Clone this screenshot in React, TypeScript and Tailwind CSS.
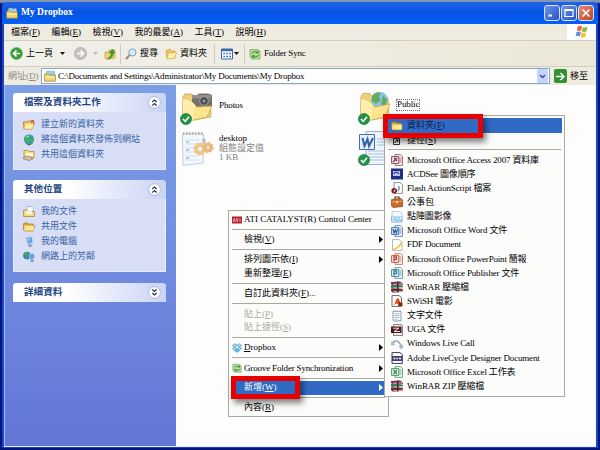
import type { ReactNode } from "react"
import clsx from "clsx"

const Svg = ({ s = 12, box = 12, children }: { s?: number; box?: number; children: ReactNode }) => (
  <svg width={s} height={s} viewBox={`0 0 ${box} ${box}`} className="shrink-0">{children}</svg>
)

// ---------- ICONS ----------

const Folder = ({ s = 12 }: { s?: number }) => (
  <Svg s={s}>
    <path d="M.5 3 1.5 2h3l1 1h4.5v1.500h1.500L10.500 10H1.500L.5 9z" fill="#d9a43a" stroke="#9a7420" strokeWidth=".6" />
    <path d="M1.300 4.600h9.600v5H1.300z" fill="#fbe58e" />
  </Svg>
)

const NewFolder = () => (
  <Svg>
    <path d="M.5 3h4l1-1h3v2l2.800.3L9 10H1z" fill="#f5cf60" stroke="#b1502a" strokeWidth=".7" />
    <path d="M3 5.200h8L9 9.800H1.200z" fill="#fff0a8" />
    <path d="m8 1 3 .3.3 3-1.300-1z" fill="#d4441c" />
  </Svg>
)

const Globe = () => (
  <Svg>
    <path d="M2.500 9.500 6 8.500l4 1-4 2z" fill="#2c6f4c" />
    <circle cx="6" cy="5.400" r="5" fill="#3f8fc4" />
    <path d="M1.500 3c2-3 5-2 6-1L6.500 4 8 6 5 9.500 3 6.500zM8 5l3-1v3L8.500 9.500z" fill="#3db455" />
    <path d="M3 2.500q1.500-1 3-.8L5 3.500z" fill="#b9e8c0" />
  </Svg>
)

const ShareFolder = () => (
  <Svg>
    <path d="M1 1.500h4l1 1h5V9H1z" fill="#f8dc7c" stroke="#ad8228" strokeWidth=".7" />
    <path d="M3 4h7v3H3z" fill="#fff8d4" />
    <path d="M0 9.500 3 7l4 1 3 1.500-4 2z" fill="#f0c39a" stroke="#4d5a93" strokeWidth=".6" />
  </Svg>
)

const DocFolder = () => (
  <Svg>
    <path d="M4 .7h4.500l1.700 1.800V9H4z" fill="#fff" stroke="#8391ad" strokeWidth=".6" />
    <path d="M.6 4h3l1 1.500h6.800v5H.6z" fill="#f7dc81" stroke="#a27b24" strokeWidth=".7" />
    <path d="M3 5.200h6v3H3z" fill="#fffbe6" />
  </Svg>
)

const Computer = () => (
  <Svg>
    <path d="m3 1.500 6-.8 1 6-5.500 1z" fill="#5d9ee8" stroke="#c2d3ec" strokeWidth=".9" />
    <path d="m5 8 3-.5.8 2 .7 1.300-4 .4z" fill="#8fa6ca" />
    <path d="m4.500 2.800 3-.4-2 3z" fill="#a9d4ff" />
  </Svg>
)

const Network = () => (
  <Svg>
    <circle cx="4" cy="4.600" r="3.800" fill="#2c74b5" />
    <path d="M1 3c2-3 4-2 5-1L4 4l1 2-2 2z" fill="#3fae52" />
    <path d="m6 3.200 5-.7.6 5-5 .8z" fill="#5b9be2" stroke="#c4d3ec" strokeWidth=".8" />
    <path d="m7.500 8.500 2.500-.4 1 2.600-3.500.4z" fill="#8297c2" />
  </Svg>
)

const BoxFolder = () => (
  <Svg>
    <path d="M2 3 3 1h3l1 1 3-1 1 3v3H2z" fill="#9fd0e6" stroke="#6d94a8" strokeWidth=".5" />
    <path d="M.6 4.200h4l1 1h5.800v6H.6z" fill="#f4d572" stroke="#a4802c" strokeWidth=".7" />
    <path d="M1.200 6.500h9.600v1.200H1.200z" fill="#fff2b4" />
  </Svg>
)

const Arrow = ({ gray }: { gray?: boolean }) => (
  <Svg s={13} box={13}>
    <circle cx="6.500" cy="6.500" r="6" fill={gray ? "#c4c4bd" : "#3a9a39"} stroke={gray ? "#aaaaa4" : "#71bb6a"} strokeWidth=".8" />
    <path
      d={gray ? "M3 6.500h6M6.500 3.500l3 3-3 3" : "M10 6.500H4M6.500 3.500l-3 3 3 3"}
      fill="none" stroke="#fff" strokeWidth="1.700"
    />
  </Svg>
)

const UpFolder = () => (
  <Svg s={12}>
    <path d="M1 4h4V2h6v8l-7 1.500-3-1z" fill="#efd26b" stroke="#b59639" strokeWidth=".6" />
    <path d="M4 10c3-1 3-3 3-5H5l3.500-4L11 5H9.200c0 3-1 5-5.200 6z" fill="#35a32e" stroke="#1d7c20" strokeWidth=".4" />
  </Svg>
)

const Search = () => (
  <Svg s={12}>
    <path d="M1 11 4.600 7" stroke="#a88768" strokeWidth="2" />
    <circle cx="7.400" cy="4.400" r="3.600" fill="#d5ebfa" stroke="#7b9dc2" />
  </Svg>
)

const OpenFolder = () => (
  <Svg s={12}>
    <path d="M1 2.500 5 1l1 2h4v7l-8 .8z" fill="#efc75a" stroke="#c2972f" strokeWidth=".6" />
    <path d="M3.600 5 11.500 4.600 9.600 10.200 1.800 11z" fill="#fff0a4" stroke="#c9a03b" strokeWidth=".5" />
  </Svg>
)

const Views = () => (
  <Svg s={12}>
    <path d="M.5 1h11v10H.5z" fill="#fff" stroke="#3a67ae" />
    <path d="M.5 1h11v2.200H.5z" fill="#3a67ae" />
    <path d="M2.300 5.500h7.600M2.300 8.500h7.600" stroke="#3e73b8" strokeWidth="1.700" strokeDasharray="1.800 1.100" />
  </Svg>
)

const Sync = ({ s = 12 }: { s?: number }) => (
  <Svg s={s}>
    <path d="M1 1.500h7l3 1.500v8H3L1 9z" fill="#b9dca0" stroke="#73ab57" strokeWidth=".8" />
    <path d="M3 5.500C4 3 7 3 9 5M9 2.800V5H6.500M9.500 7C8 9.500 5 9.500 3.500 8M3.500 10V7.800H6" fill="none" stroke="#43902f" strokeWidth="1.100" />
  </Svg>
)

const Flag = () => (
  <svg width="14" height="14" viewBox="0 0 14 14">
    <path d="M2.800 1.500Q5 .2 7 1.600L6 6.200Q4 5 1.800 6z" fill="#e5683a" />
    <path d="M7.800 2Q10 3 12.600 1.800L11.500 6.500Q9 7.400 6.800 6.500z" fill="#8bbf3f" />
    <path d="M1.500 7Q4 5.800 5.900 7.200L4.800 11.500Q3 10.300.6 11.300z" fill="#5c8ed8" />
    <path d="M6.600 7.600Q9 8.500 11.300 7.500L10.200 12Q8 13 5.500 12z" fill="#f2c338" />
  </svg>
)

const Check = () => (
  <svg width="12" height="12" viewBox="0 0 12 12" className="absolute -left-px bottom-0">
    <circle cx="6" cy="6" r="5.600" fill="#249246" stroke="#13763a" strokeWidth=".6" />
    <path d="m3 6 2.200 2.400L9 3.800" fill="none" stroke="#fff" strokeWidth="1.600" />
  </svg>
)

const PhotosIcon = () => (
  <div className="relative h-[33px] w-[33px]">
    <svg width="33" height="32" viewBox="0 0 33 32">
      <path d="M2 4.500 4 2h7l2 3 16 1 1 19-17 3L2 26z" fill="#ecd07a" stroke="#c09c3f" strokeWidth=".7" />
      <path d="M11 3h5l2-1.500h9l4 1.500v12l-20 1z" fill="#74726d" />
      <path d="M11 3h19v3.500H11z" fill="#93918b" />
      <circle cx="23" cy="9" r="4.300" fill="#4a4a4c" stroke="#a8a6a1" />
      <circle cx="23" cy="9" r="1.700" fill="#8d9299" />
      <path d="M2 7q6 0 9 3l5 5 15-1-5 11-13 3L2 27z" fill="#fae48d" stroke="#c8a344" strokeWidth=".7" />
      <path d="M2 7q6 0 9 3l3 3-2 15-10-1z" fill="#fdeeab" />
    </svg>
    <Check />
  </div>
)

const PublicIcon = () => (
  <div className="relative h-[33px] w-[33px]">
    <svg width="33" height="32" viewBox="0 0 33 32">
      <path d="M2 4.500 4 1.500h7l2 3L29 6l1 19-18 3L2 26z" fill="#ecd07a" stroke="#c09c3f" strokeWidth=".7" />
      <circle cx="20.500" cy="8" r="8" fill="#8fc6e6" stroke="#6fa8cc" strokeWidth=".5" />
      <path d="M13 4q4-5 9-3l-2 4 2 3-5 4-4-3zM24 3l4 5-2 6-4-2 1-4z" fill="#62ab62" />
      <path d="M2 7q6 0 9 3l5 5 15-3-5 13-13 3L2 27z" fill="#fae48d" stroke="#c8a344" strokeWidth=".7" />
      <path d="M2 7q6 0 9 3l3 3-2 15-10-1z" fill="#fdeeab" />
    </svg>
    <Check />
  </div>
)

const IniIcon = () => (
  <svg width="33" height="36" viewBox="0 0 33 36">
    <path d="M1.500 3H22.500l-.5 29-20 2.500z" fill="#f3f8fc" stroke="#b5bec8" strokeWidth=".8" />
    <path d="M2 2.500h21" stroke="#b3b3b3" strokeWidth="3" strokeDasharray="1.500 1.500" />
    <path d="M4 9h14M4 13h13M4 17h9M4 21h8M4 25h12M4 29h14" stroke="#d3e0ec" />
    <path d="M5 11h3M5 19h3M5 27h3" stroke="#9bbde2" strokeWidth="1.500" />
    <circle cx="19" cy="18" r="4" fill="none" stroke="#ecc78e" strokeWidth="4" />
    <circle cx="19" cy="18" r="5.800" fill="none" stroke="#ecc78e" strokeWidth="1.700" strokeDasharray="2.500 2" />
    <circle cx="27" cy="16.500" r="3" fill="none" stroke="#e6bb7c" strokeWidth="3.600" />
    <circle cx="27" cy="16.500" r="5" fill="none" stroke="#e6bb7c" strokeWidth="1.500" strokeDasharray="2 1.800" />
    <path d="m21 8 3.500-.5V12H22z" fill="#b4bcc4" />
  </svg>
)

const WordBig = () => (
  <div className="relative h-[35px] w-[33px]">
    <svg width="33" height="35" viewBox="0 0 33 35">
      <path d="M7 .5h25v33H7z" fill="#eff5fc" stroke="#7f9dc9" strokeWidth=".8" />
      <path d="M18 8h12M18 11h12M18 14h12M9 20h21M9 23h21M9 26h21M9 29h21" stroke="#a9c0e0" />
      <path d="M.5 3.500h15v15H.5z" fill="#e5effb" stroke="#456eab" />
      <path d="m3.500 7 2 8 3-7 1.500 7 4-8" fill="none" stroke="#2f60a8" strokeWidth="2" />
    </svg>
    <Check />
  </div>
)

const Office = ({ c, mark }: { c: string; mark: string }) => (
  <Svg>
    <path d="M4 .6h5.500l2 2v8.800H4z" fill="#f1f5fb" stroke={c} strokeWidth=".7" />
    <path d="M8.500 4h2M8.500 6h2M8.500 8h2" stroke={c} strokeWidth=".7" />
    <path d="M.6 2.600h7.200v6.800H.6z" fill="#e9f1fa" stroke={c} strokeWidth=".9" />
    <path d={mark} fill="none" stroke={c} strokeWidth="1.300" />
  </Svg>
)

const Rar = () => (
  <Svg>
    <path d="m0 1 9-.6 3 2V4L2 4.500 0 3z" fill="#8b2862" />
    <path d="m0 4 10 .3 2 .6v2L2 8 0 6.500z" fill="#36794f" />
    <path d="m0 7.500 10 .3 2 .5v2.200L2 11.700 0 10z" fill="#7b2530" />
    <path d="m2 3.400 10-.6M2 7l10-.6M2 10.800l10-.8" stroke="#e5dfd0" strokeWidth=".8" />
    <path d="M6 .5h1.500v11H6z" fill="#372f37" />
  </Svg>
)

const Shortcut = () => (
  <Svg>
    <path d="M2.500 4.500h6v6h-6z" fill="#fff" stroke="#333" />
    <path d="M4 9c0-2 1-2.500 3-2.500M5.500 5.500l2 1-1.500 2" fill="none" stroke="#111" />
  </Svg>
)

const AcdSee = () => (
  <Svg>
    <path d="M0 .5h12v11H0z" fill="#1f2f88" />
    <path d="M2 3h7v5H2z" fill="#b9c6ee" />
    <path d="M3 6q2-4 5 0M4 9h7" fill="none" stroke="#222f76" strokeWidth="1.200" />
  </Svg>
)

const FlashDoc = () => (
  <Svg>
    <path d="M3 .6h6l2.400 2v8.800H3z" fill="#fff" stroke="#6a7590" strokeWidth=".8" />
    <path d="M8 4v4q0 1-1.500 1" fill="none" stroke="#3d5c9c" />
    <circle cx="3.200" cy="8.800" r="2.800" fill="#7f1414" />
    <path d="M4.500 7q-1.200 0-1.500 3.500M2.800 8.700h1.700" stroke="#fff" strokeWidth=".7" fill="none" />
  </Svg>
)

const Briefcase = () => (
  <Svg>
    <path d="M4 3V1h4v2" fill="none" stroke="#633016" strokeWidth="1.200" />
    <path d="m.6 3.500 9.400-1L11.500 4v6.500L2 11.500.6 10z" fill="#c86d2c" stroke="#814019" strokeWidth=".7" />
    <path d="m.8 6 10.500-.8" stroke="#f0a565" />
    <path d="M5 5h2v2.200H5z" fill="#f7dc8b" />
  </Svg>
)

const Bmp = () => (
  <Svg>
    <path d="M1 .6h7.500l2.500 2v8.800H1z" fill="#f4faff" stroke="#99b9d4" strokeWidth=".7" />
    <path d="M0 5.500h11.500v5H0z" fill="#7abde4" />
    <path d="M1.500 9.500v-3h1.500v3zM5 9.500v-3l1.200 1.500L7.300 6.500v3M9 9.500v-3h1.500V8H9" fill="none" stroke="#fff" strokeWidth=".7" />
  </Svg>
)

const Fdf = () => (
  <Svg>
    <path d="M1.500.6H8l3 2.400v8.400H1.500z" fill="#fff" stroke="#999" strokeWidth=".7" />
    <path d="M1 10q6-1 9-7l1 1q-2 5-8 7z" fill="#efbd33" />
  </Svg>
)

const Swish = () => (
  <Svg>
    <path d="M1 .6h7l2.500 2v8.800H1z" fill="#fff" stroke="#444" strokeWidth=".8" />
    <path d="m3 10 3-7 2 1 2.500 7-3-2-2-.5z" fill="#d9501b" />
    <path d="M8 7l3.500 1v3H7z" fill="#8e210c" />
  </Svg>
)

const Txt = () => (
  <Svg>
    <path d="M2 1.300h8v9.400l-7 .5-1-1z" fill="#f7fbff" stroke="#6f8294" strokeWidth=".8" />
    <path d="M3.500 3.600h5M3.500 5.500h5M3.500 7.400h5M3.500 9.200h3" stroke="#80a3be" strokeWidth=".7" />
  </Svg>
)

const Uga = () => (
  <Svg>
    <path d="M2.500.5h8l1 2v9h-9z" fill="#eee" stroke="#555" strokeWidth=".7" />
    <path d="M0 2.500h10.500V9H0z" fill="#52151d" />
    <path d="M2 4.200h6L3 7.500h6" fill="none" stroke="#f2dfdf" />
  </Svg>
)

const Phone = () => (
  <Svg>
    <path d="M1.500 5.500q1-3 4-2.500 3 .5 4.500 5" fill="none" stroke="#8fabc0" strokeWidth="1.400" />
    <path d="m0 4.500 3-.5v3L.5 7zM8.500 8l3-1 .3 3-2.500.6z" fill="#b6cbd9" stroke="#7893a7" strokeWidth=".5" />
  </Svg>
)

const LiveCycle = () => (
  <Svg>
    <path d="M1 .6h8l2.300 2v8.800H1z" fill="#fff" stroke="#39355e" strokeWidth="1" />
    <path d="M1 4h10.300v5H1z" fill="#443c79" />
    <path d="M2.500 6.500h2M5.500 6.500H7M8 6.500h2" stroke="#fff" strokeWidth="1.600" />
  </Svg>
)

const Ati = () => (
  <svg width="10" height="8" viewBox="0 0 10 8" className="shrink-0">
    <path d="M0 .5h10v7H0z" fill="#b22432" />
    <path d="m1.200 6 1.200-3.500L3.500 6M4 3h2.400M5.200 3v3M8 2.500V6" fill="none" stroke="#f6d6d6" strokeWidth=".8" />
  </svg>
)

const DropboxIcon = () => (
  <Svg s={10}>
    <path d="m3.500.8 2.500 2-3 2L.5 3zM8.500.8l3 2.200L9 4.800 6 2.800zM.5 6.500 3 4.800l3 2-2.500 2zM11.500 6.500 9 4.800l-3 2 2.500 2z" fill="#a8e0f5" stroke="#3493bd" strokeWidth=".8" />
    <path d="m3 9.300 3-2 3 2-3 2z" fill="#69b9dc" stroke="#3493bd" strokeWidth=".5" />
  </Svg>
)

// ---------- SIDEBAR ----------

const Chevron = ({ down }: { down?: boolean }) => (
  <svg width="13" height="13" viewBox="0 0 13 13">
    <circle cx="6.500" cy="6.500" r="5.800" fill="#fff" stroke="#a3adcb" strokeWidth=".8" />
    <path
      d={down ? "m4.300 3.500 2.200 2 2.200-2M4.300 7l2.200 2 2.200-2" : "m4.300 6 2.200-2 2.200 2M4.300 9.500l2.200-2 2.200 2"}
      fill="none" stroke="#26325c" strokeWidth="1.200"
    />
  </svg>
)

function Panel({ title, items, className }: { title: string; items?: [ReactNode, string][]; className?: string }) {
  return (
    <div className={className}>
      <div className="flex h-[19px] items-center justify-between rounded-t-[3px] bg-gradient-to-r from-white from-35% to-[#c9d3f5] pl-[11px] pr-[5px]">
        <span className="text-[9.5px] font-bold tracking-[0.1px] text-[#21437f]">{title}</span>
        <Chevron down={!items} />
      </div>
      {items && (
        <div className="border border-t-0 border-[#e8ecfb] bg-[#d7def6] pb-[7px] pl-[9px] pt-[5px]">
          {items.map(([icon, label]) => (
            <div key={label} className="flex h-[15px] items-center gap-[6px] text-[#36619f]">
              {icon}<span>{label}</span>
            </div>
          ))}
        </div>
      )}
    </div>
  )
}

const tasks: [ReactNode, string][] = [
  [<NewFolder />, "建立新的資料夾"],
  [<Globe />, "將這個資料夾發佈到網站"],
  [<ShareFolder />, "共用這個資料夾"],
]

const places: [ReactNode, string][] = [
  [<DocFolder />, "我的文件"],
  [<Folder />, "共用文件"],
  [<Computer />, "我的電腦"],
  [<Network />, "網路上的芳鄰"],
]

// ---------- MENUS ----------

// label with an underlined access key, e.g. 檔案(F)
const Key = ({ t, k }: { t: string; k: string }) => (
  <span>{t}(<u className="underline-offset-1">{k}</u>)</span>
)

const Sep = () => <div className="mx-[3px] h-px shrink-0 bg-[#aaa89f]" />

function Item({ icon, children, sub, on, off, className = "h-[19.3px]" }: any) {
  return (
    <div className={clsx("flex shrink-0 items-center pr-[5px]", className, on && "text-white", off && "text-[#aaa8a0]")}>
      <span className="flex w-[15px] shrink-0 items-center pl-[3px]">{icon}</span>
      <span className="flex-1">{children}</span>
      {sub && (
        <svg width="4" height="7" viewBox="0 0 4 7"><path d="M0 0v7l4-3.500z" fill="currentColor" /></svg>
      )}
    </div>
  )
}

const newItems: [ReactNode, string, string][] = [
  [<Office c="#8d3045" mark="M2 8 6 4M3 4l3 3" />, "Microsoft Office Access 2007 資料庫", "tracking-[-0.17px]"],
  [<AcdSee />, "ACDSee 圖像順序", "tracking-[-0.18px]"],
  [<FlashDoc />, "Flash ActionScript 檔案", "tracking-[-0.16px]"],
  [<Briefcase />, "公事包", "tracking-[0]"],
  [<Bmp />, "點陣圖影像", "tracking-[-0.1px]"],
  [<Office c="#3567ac" mark="m2 4 1 4 1.200-3 1.200 3L6.600 4" />, "Microsoft Office Word 文件", "tracking-[-0.1px]"],
  [<Fdf />, "FDF Document", "tracking-[-0.2px]"],
  [<Office c="#c64a2d" mark="M3 8.500V4h2.500v2.500H3" />, "Microsoft Office PowerPoint 簡報", "tracking-[-0.19px]"],
  [<Office c="#2c7f92" mark="M3 8.500V4h2.500v2.500H3" />, "Microsoft Office Publisher 文件", "tracking-[-0.17px]"],
  [<Rar />, "WinRAR 壓縮檔", "tracking-[-0.1px]"],
  [<Swish />, "SWiSH 電影", "tracking-[-0.25px]"],
  [<Txt />, "文字文件", "tracking-[-0.1px]"],
  [<Uga />, "UGA 文件", "tracking-[-0.2px]"],
  [<Phone />, "Windows Live Call", "tracking-[-0.15px]"],
  [<LiveCycle />, "Adobe LiveCycle Designer Document", "tracking-[-0.17px]"],
  [<Office c="#3b8f45" mark="m2.500 4 3.500 4M6 4 2.500 8" />, "Microsoft Office Excel 工作表", "tracking-[-0.16px]"],
  [<Rar />, "WinRAR ZIP 壓縮檔", "tracking-[-0.08px]"],
]

function ContextMenu() {
  return (
    <div className="absolute left-[228px] top-[210px] flex h-[207px] w-[161px] flex-col border border-[#aaa89f] bg-[#fcfcfb]">
      <Item icon={<Ati />} className="h-[17.5px]"><span className="tracking-[-0.03px]">ATI CATALYST(R) Control Center</span></Item>
      <Sep />
      <Item sub><Key t="檢視" k="V" /></Item>
      <Sep />
      <div className="h-[3px] shrink-0" />
      <Item sub className="h-[14px]"><Key t="排列圖示依" k="I" /></Item>
      <Item className="h-[13px]"><Key t="重新整理" k="E" /></Item>
      <div className="h-[3px] shrink-0" />
      <Sep />
      <Item><Key t="自訂此資料夾" k="F" />...</Item>
      <Sep />
      <div className="h-[3px] shrink-0" />
      <Item off className="h-[14px]"><Key t="貼上" k="P" /></Item>
      <Item off className="h-[13px]"><Key t="貼上捷徑" k="S" /></Item>
      <div className="h-[3px] shrink-0" />
      <Sep />
      <Item sub icon={<DropboxIcon />}><u className="underline-offset-1">D</u>ropbox</Item>
      <Sep />
      <Item sub icon={<Sync s={10} />}><span className="tracking-[-0.17px]">Groove Folder Synchronization</span></Item>
      <Sep />
      <div className="my-[2px] mx-[2px] shrink-0 bg-[#316ac5]">
        <Item sub on className="-mx-[2px] h-[14px]"><Key t="新增" k="W" /></Item>
      </div>
      <Sep />
      <Item className="h-[19px]"><Key t="內容" k="R" /></Item>
    </div>
  )
}

function NewMenu() {
  return (
    <div className="absolute left-[384px] top-[115px] h-[282px] w-[181px] border border-[#aaa89f] bg-[#fcfcfb] pt-[2px]">
      <div className="mx-[2px] flex h-[15px] items-center gap-[4px] bg-[#316ac5] pl-[4px] text-[#0b1c48]">
        <Folder /><Key t="資料夾" k="F" />
      </div>
      <div className="flex h-[14px] items-center gap-[4px] pl-[6px]"><Shortcut /><Key t="捷徑" k="S" /></div>
      <div className="h-[2px]" />
      <Sep />
      <div className="h-[3px]" />
      {newItems.map(([icon, label, tracking]) => (
        <div key={label} className="flex h-[14.15px] items-center gap-[4px] whitespace-nowrap pl-[6px]">
          {icon}<span className={tracking}>{label}</span>
        </div>
      ))}
    </div>
  )
}

// ---------- WINDOW ----------

const CapButton = ({ red, children }: { red?: boolean; children: ReactNode }) => (
  <div className={clsx(
    "flex h-[16px] w-[16px] items-center justify-center rounded-[3px] border border-[#dce6fb] bg-gradient-to-br",
    red ? "from-[#e58a70] to-[#c0401f]" : "from-[#6f93ea] to-[#2453c4]"
  )}>
    <svg width="12" height="12" viewBox="0 0 12 12" fill="none" stroke="#fff">{children}</svg>
  </div>
)

const Caret = ({ gray }: { gray?: boolean }) => (
  <svg width="5" height="3" viewBox="0 0 5 3"><path d="M0 0h5L2.500 3z" fill={gray ? "#bbb" : "#111"} /></svg>
)

const menus = [["檔案", "F", "w-[40.5px]"], ["編輯", "E", "w-[41px]"], ["檢視", "V", "w-[42px]"], ["我的最愛", "A", "w-[60px]"], ["工具", "T", "w-[41px]"], ["說明", "H", "w-[40px]"]]

export default function App() {
  return (
    <div className="relative h-[450px] w-[600px] overflow-hidden bg-gradient-to-b from-[#8496b4] from-[2px] to-[#07167c] to-[4px] pl-[2px] pr-[2px] pt-[1.5px] text-[9px] leading-none text-black [font-family:'Liberation_Serif','Noto_Sans_CJK_TC',serif]">
      <div className="flex h-[446px] flex-col rounded-t-[5px] bg-[#1548c8] px-[2px] pb-px">

        {/* TITLE BAR */}
        <div className="-mx-[2px] flex h-[22.5px] shrink-0 items-center rounded-t-[5px] bg-gradient-to-b from-[#1f63e8] via-[#0553e2] to-[#0660f8] pl-[4px] pr-[4px]">
          <BoxFolder />
          <span className="ml-[3px] flex-1 text-[9.5px] font-bold text-white">My Dropbox</span>
          <div className="flex gap-px">
            <CapButton><path d="M2.500 8.500H6" strokeWidth="2" /></CapButton>
            <CapButton><path d="M2 2.500h8v7H2zM2 3.500h8" strokeWidth="1.200" /></CapButton>
            <CapButton red><path d="m2.500 2.500 7 7M9.500 2.500l-7 7" strokeWidth="1.700" /></CapButton>
          </div>
        </div>

        {/* MENU BAR */}
        <div className="flex h-[17px] shrink-0 items-center border-b border-[#d2cfc0] bg-[#eeece1] pl-[7px]">
          {menus.map(([t, k, w]) => <div key={k} className={w}><Key t={t} k={k} /></div>)}
          <div className="ml-auto flex h-[16px] w-[29px] items-center justify-center bg-white"><Flag /></div>
        </div>

        {/* TOOLBAR */}
        <div className="flex h-[26px] shrink-0 items-center border-b border-[#d2cfc0] bg-gradient-to-r from-[#f1f0ea] to-[#ece8d8] pl-[6px]">
          <Arrow />
          <span className="ml-[3px] w-[34px]">上一頁</span>
          <Caret />
          <div className="ml-[9px]"><Arrow gray /></div>
          <div className="ml-[6px] mr-[6px]"><Caret gray /></div>
          <UpFolder />
          <div className="mx-[4px] h-[20px] w-px bg-[#cfccbd]" />
          <Search />
          <span className="ml-[3px] w-[25px]">搜尋</span>
          <OpenFolder />
          <span className="ml-[3px] w-[34px]">資料夾</span>
          <div className="mr-[6px] h-[20px] w-px bg-[#cfccbd]" />
          <Views />
          <div className="ml-px mr-[5px]"><Caret /></div>
          <div className="mr-[4px] h-[20px] w-px bg-[#cfccbd]" />
          <Sync />
          <span className="ml-[3px] tracking-[-0.2px]">Folder Sync</span>
        </div>

        {/* ADDRESS BAR */}
        <div className="flex h-[18px] shrink-0 items-center bg-[#eeebdf] pl-[4px]">
          <span className="w-[33px] text-[#8d8b83]"><Key t="網址" k="D" /></span>
          <div className="flex h-[16px] w-[509px] items-center border border-[#8aa5c8] bg-white pl-[2px] pr-px">
            <BoxFolder />
            <span className="ml-[2px] flex-1 whitespace-nowrap tracking-[-0.2px]">C:\Documents and Settings\Administrator\My Documents\My Dropbox</span>
            <div className="flex h-[14px] w-[11px] items-center justify-center rounded-[2px] bg-[#c3d3fb]">
              <svg width="7" height="5" viewBox="0 0 7 5"><path d="m1 1 2.500 2.500L6 1" fill="none" stroke="#34548f" strokeWidth="1.500" /></svg>
            </div>
          </div>
          <div className="ml-[4px] mr-[3px] flex h-[14px] w-[13px] items-center justify-center rounded-[2px] bg-[#319133]">
            <svg width="9" height="9" viewBox="0 0 9 9"><path d="M0 4.500h7.500M4.500 1l3.500 3.500L4.500 8" fill="none" stroke="#fff" strokeWidth="1.500" /></svg>
          </div>
          <span>移至</span>
        </div>

        {/* CONTENT */}
        <div className="flex min-h-0 flex-1 border-b border-[#e6ecfa] bg-[#fdfdfd]">
          <div className="w-[172px] border-l border-[#a9bdf2] bg-gradient-to-b from-[#7b9fe6] to-[#6476d6] pl-[8px] pr-[10px] pt-[8px]">
            <Panel title="檔案及資料夾工作" items={tasks} />
            <Panel title="其他位置" items={places} className="mt-[10px]" />
            <Panel title="詳細資料" className="mt-[11px]" />
          </div>
          <div className="grid flex-1 grid-cols-[178px_1fr] content-start gap-y-[5px] pl-[5px] pt-[7px]">
            <div className="flex h-[34px] gap-[5px]">
              <PhotosIcon /><span className="pt-[9px] tracking-[-0.1px]">Photos</span>
            </div>
            <div className="flex h-[34px] gap-[5px]">
              <PublicIcon /><span className="mt-[8px] h-[10px] tracking-[-0.1px] outline-1 outline-dotted outline-gray-500">Public</span>
            </div>
            <div className="flex gap-[5px]">
              <IniIcon />
              <div className="pt-[3px] leading-[9.5px] text-[#7f7f7f]"><p className="text-black">desktop</p><p>組態設定值</p><p>1 KB</p></div>
            </div>
            <WordBig />
          </div>
        </div>
      </div>

      <ContextMenu />
      <NewMenu />

      {/* highlight frames */}
      <div className="absolute left-[383px] top-[114px] h-[24px] w-[100px] border-[5px] border-[#e60000] shadow-[3px_4px_6px_rgba(0,0,0,0.5)]" />
      <div className="absolute left-[231px] top-[376px] h-[23px] w-[69px] border-[5px] border-[#e60000] shadow-[3px_4px_6px_rgba(0,0,0,0.5)]" />
    </div>
  )
}
